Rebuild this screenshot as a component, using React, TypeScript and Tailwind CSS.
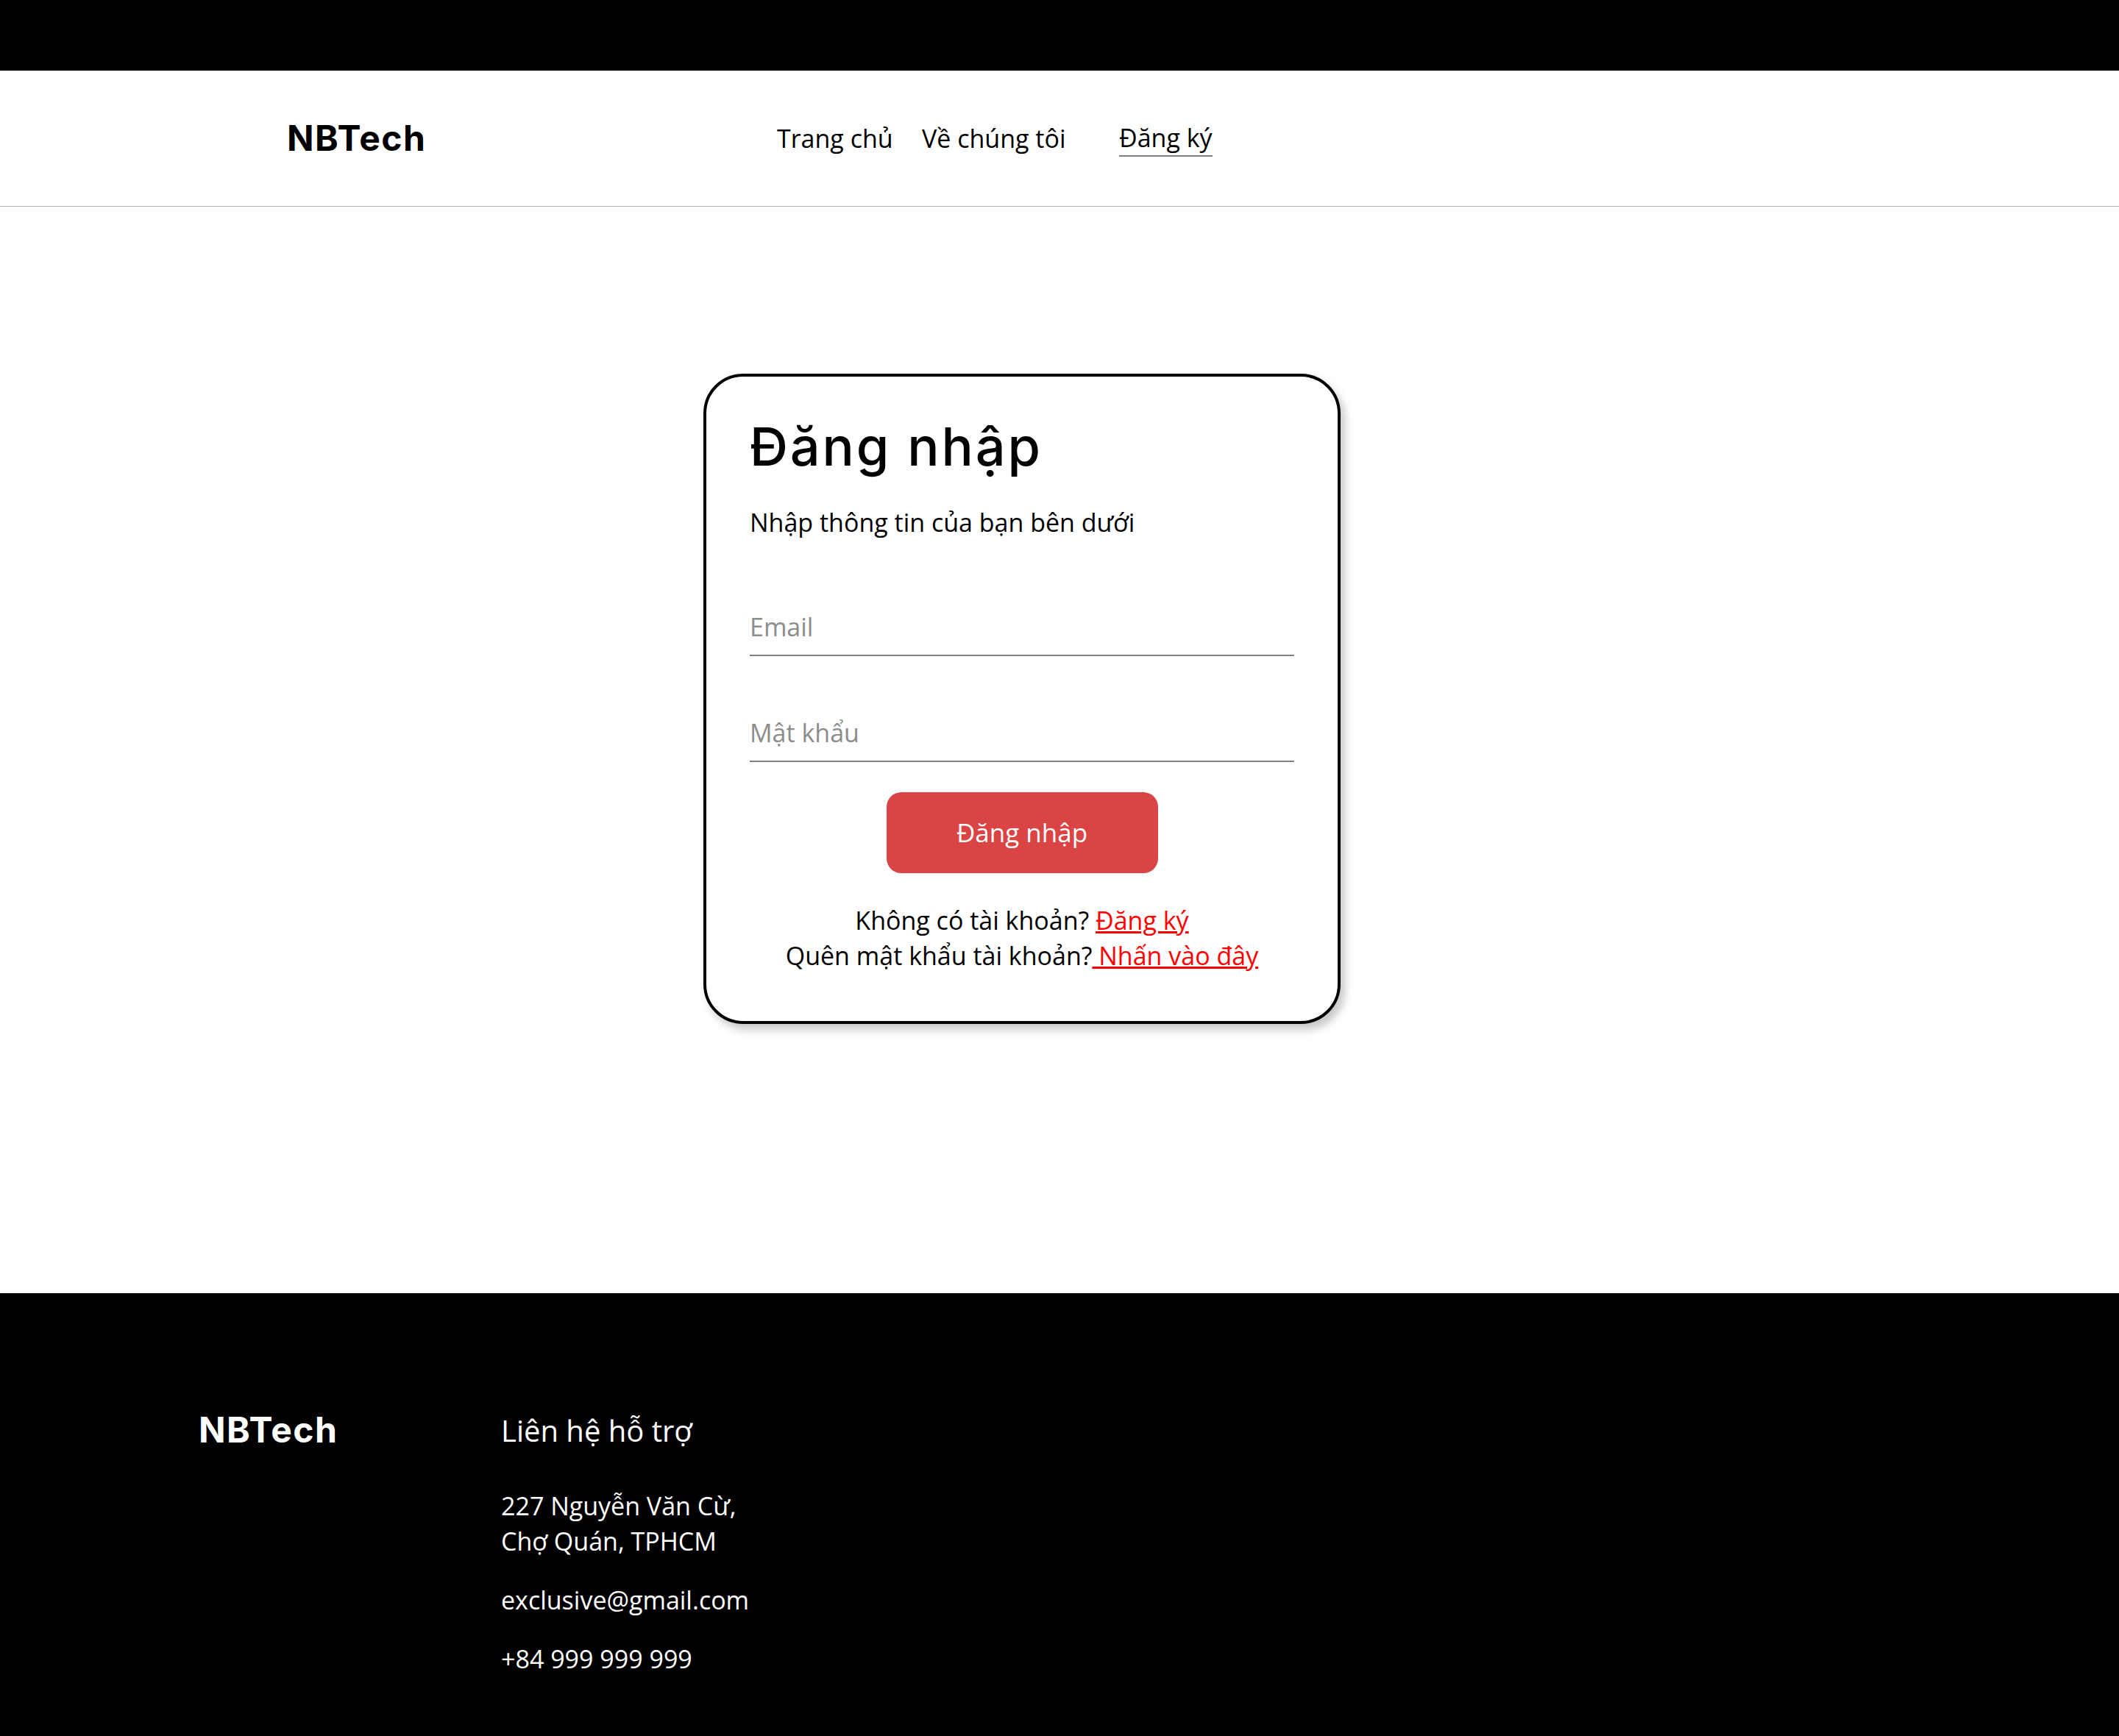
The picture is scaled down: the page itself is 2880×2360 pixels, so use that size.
import React from "react";

const body = "font-['Open_Sans','Noto_Sans',sans-serif]";

export default function App() {
  return (
    <div className={`w-[2880px] bg-white text-black ${body}`}>
      <div className="h-[96px] bg-black" />
      <header className="h-[185px] border-b border-[#b3b3b3] flex items-center pl-[390px]">
        <div className="w-[666px] font-['Inter',sans-serif] font-bold text-[48px] leading-[58px] tracking-[0.03em]">
          NBTech
        </div>
        <nav className="flex items-center text-[34px] leading-[48px]">
          <a className="w-[197px]">Trang chủ</a>
          <a className="w-[268px]">Về chúng tôi</a>
          <a className="border-b-2 border-[#7f7f7f]">Đăng ký</a>
        </nav>
      </header>

      <main className="h-[1477px] pt-[227px] pl-[956px]">
        <div className="w-[866px] border-4 border-black rounded-[54px] bg-white shadow-[6px_8px_12px_rgba(0,0,0,0.22)] px-[59px] pt-[52px] pb-[65px] flex flex-col">
          <h1 className="font-['Inter',sans-serif] font-medium text-[72px] leading-[86px] tracking-[0.04em]">
            Đăng nhập
          </h1>
          <p className="mt-[36px] text-[34px] leading-[48px]">Nhập thông tin của bạn bên dưới</p>
          <input
            className="mt-[94px] h-[64px] w-full border-b-2 border-[#808080] pb-[14px] text-[34px] outline-none placeholder:text-[#8c8c8c]"
            placeholder="Email"
          />
          <input
            className="mt-[80px] h-[64px] w-full border-b-2 border-[#808080] pb-[14px] text-[34px] outline-none placeholder:text-[#8c8c8c]"
            placeholder="Mật khẩu"
            type="text"
          />
          <button className="mt-[41px] self-center w-[369px] h-[110px] rounded-[20px] bg-[#db4444] text-white text-[35px] leading-[48px] font-medium">
            Đăng nhập
          </button>
          <div className="mt-[40px] text-center text-[34px] leading-[48px]">
            <p>
              Không có tài khoản? <a className="text-[#ff0000] underline">Đăng ký</a>
            </p>
            <p>
              Quên mật khẩu tài khoản?<a className="text-[#ff0000] underline"> Nhấn vào đây</a>
            </p>
          </div>
        </div>
      </main>

      <footer className="h-[602px] bg-black text-white flex pl-[270px] pt-[157px]">
        <div className="w-[411px] font-['Inter',sans-serif] font-bold text-[48px] leading-[58px] tracking-[0.03em]">
          NBTech
        </div>
        <div className="flex flex-col">
          <h3 className="text-[40px] leading-[60px] font-medium">Liên hệ hỗ trợ</h3>
          <p className="mt-[48px] text-[34px] leading-[48px]">
            227 Nguyễn Văn Cừ,
            <br />
            Chợ Quán, TPHCM
          </p>
          <p className="mt-[32px] text-[34px] leading-[48px]">exclusive@gmail.com</p>
          <p className="mt-[32px] text-[34px] leading-[48px]">+84 999 999 999</p>
        </div>
      </footer>
    </div>
  );
}
